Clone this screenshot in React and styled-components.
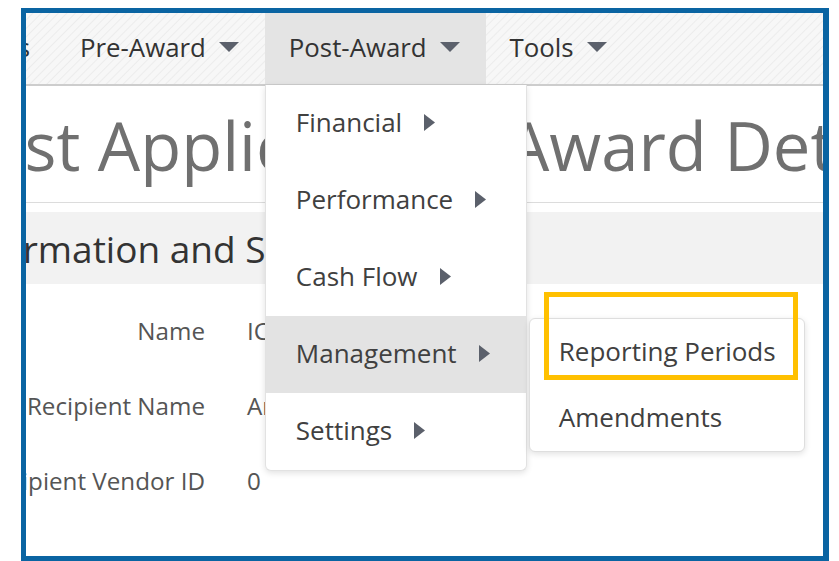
import React from 'react'
import styled, { createGlobalStyle } from 'styled-components'

const GlobalStyle = createGlobalStyle`
  html, body {
    margin: 0;
    padding: 0;
    background: #ffffff;
    font-family: "Open Sans", "Liberation Sans", sans-serif;
  }
`

const Frame = styled.div`
  box-sizing: border-box;
  width: 808px;
  height: 553px;
  margin: 8px 0 0 21px;
  border: 5px solid #0a64a2;
  border-right-width: 6px;
  position: relative;
  overflow: hidden;
  background: #ffffff;
`

const NavBar = styled.nav`
  display: flex;
  height: 71px;
  border-bottom: 2px solid #cdcdcd;
  background-color: #f4f4f4;
  background-image: repeating-linear-gradient(
    135deg,
    #f7f7f7 0px,
    #f7f7f7 4px,
    #ececec 5px,
    #f7f7f7 6px
  );
`

// keeps the first menu entry pushed off the left edge
const NavLead = styled.div`
  width: 30px;
  display: flex;
  justify-content: flex-end;
  flex-shrink: 0;
`

const NavItem = styled.div`
  position: relative;
  display: flex;
  align-items: center;
  gap: 13px;
  height: 71px;
  box-sizing: border-box;
  padding: 0 26px 4px 24px;
  font-size: 25.8px;
  color: #333333;
  white-space: nowrap;
  background: ${({ $active }) => ($active ? '#e4e4e4' : 'transparent')};
`

const Menu = styled.div`
  position: absolute;
  top: calc(100% + 1px);
  left: 0;
  width: 262px;
  box-sizing: border-box;
  background: #ffffff;
  border: 1px solid #e2e2e2;
  border-top: none;
  border-radius: 0 0 6px 6px;
  box-shadow: 0 2px 6px rgba(0, 0, 0, 0.12);
  z-index: 5;
`

const MenuItem = styled.div`
  position: relative;
  display: flex;
  align-items: center;
  gap: 22px;
  height: 77px;
  box-sizing: border-box;
  padding: 0 0 3px 30px;
  font-size: 26px;
  color: #404040;
  background: ${({ $open }) => ($open ? '#e3e3e3' : 'transparent')};
`

const SubMenu = styled.div`
  position: absolute;
  top: 2px;
  left: calc(100% + 3px);
  width: 276px;
  box-sizing: border-box;
  background: #ffffff;
  border: 1px solid #dedede;
  border-radius: 6px;
  box-shadow: 0 2px 6px rgba(0, 0, 0, 0.12);
`

const SubItem = styled.div`
  display: flex;
  align-items: center;
  height: 66px;
  box-sizing: border-box;
  padding: 0 0 2px 29px;
  font-size: 26px;
  color: #404040;
  white-space: nowrap;
`

const Highlight = styled.div`
  position: absolute;
  top: -27px;
  left: 14px;
  width: 254px;
  height: 88px;
  box-sizing: border-box;
  border: 5px solid #ffc000;
  pointer-events: none;
`

const PageTitle = styled.h1`
  margin: 16px 0 0 -82px;
  padding-bottom: 13px;
  font-size: 67px;
  font-weight: 400;
  line-height: 87px;
  color: #707070;
  white-space: nowrap;
`

const TitleRule = styled.div`
  border-bottom: 1px solid #dcdcdc;
`

const SectionBand = styled.div`
  margin-top: 9px;
  height: 72px;
  display: flex;
  align-items: center;
  background: #f2f2f2;
  overflow: hidden;
`

const SectionTitle = styled.h2`
  margin: 0 0 0 -71px;
  font-size: 37px;
  font-weight: 400;
  color: #333333;
  white-space: nowrap;
`

const Details = styled.div`
  display: grid;
  grid-template-columns: 179px 1fr;
  column-gap: 42px;
  padding-top: 9px;
`

const Label = styled.div`
  display: flex;
  justify-content: flex-end;
  align-items: center;
  height: 75px;
  font-size: 24.2px;
  color: #555555;
  white-space: nowrap;
`

const Value = styled.div`
  display: flex;
  align-items: center;
  height: 75px;
  font-size: 24.2px;
  color: #555555;
  white-space: nowrap;
`

const CaretDown = () => (
  <svg width="20" height="10" viewBox="0 0 20 10" aria-hidden="true">
    <path d="M0 0 H20 L10 10 Z" fill="#5b606b" />
  </svg>
)

const CaretRight = () => (
  <svg width="11" height="17" viewBox="0 0 11 17" aria-hidden="true">
    <path d="M0 0 L11 8.5 L0 17 Z" fill="#5b606b" />
  </svg>
)

const postAwardMenu = ['Financial', 'Performance', 'Cash Flow', 'Management', 'Settings']

const details = [
  ['Name', 'ICDP-2021-04'],
  ['Recipient Name', 'Amherst Inc.'],
  ['Recipient Vendor ID', '0'],
]

export default function App() {
  return (
    <>
      <GlobalStyle />
      <Frame>
        <NavBar>
          <NavLead>
            <NavItem>Grants</NavItem>
          </NavLead>
          <NavItem>
            Pre-Award <CaretDown />
          </NavItem>
          <NavItem $active>
            Post-Award <CaretDown />
            <Menu>
              {postAwardMenu.map((item) => (
                <MenuItem key={item} $open={item === 'Management'}>
                  {item} <CaretRight />
                  {item === 'Management' && (
                    <SubMenu>
                      <SubItem>Reporting Periods</SubItem>
                      <SubItem>Amendments</SubItem>
                      <Highlight />
                    </SubMenu>
                  )}
                </MenuItem>
              ))}
            </Menu>
          </NavItem>
          <NavItem>
            Tools <CaretDown />
          </NavItem>
        </NavBar>

        <PageTitle>Post Application / Award Details</PageTitle>
        <TitleRule />

        <SectionBand>
          <SectionTitle>Information and Summary</SectionTitle>
        </SectionBand>

        <Details>
          {details.map(([label, value]) => (
            <React.Fragment key={label}>
              <Label>{label}</Label>
              <Value>{value}</Value>
            </React.Fragment>
          ))}
        </Details>
      </Frame>
    </>
  )
}
